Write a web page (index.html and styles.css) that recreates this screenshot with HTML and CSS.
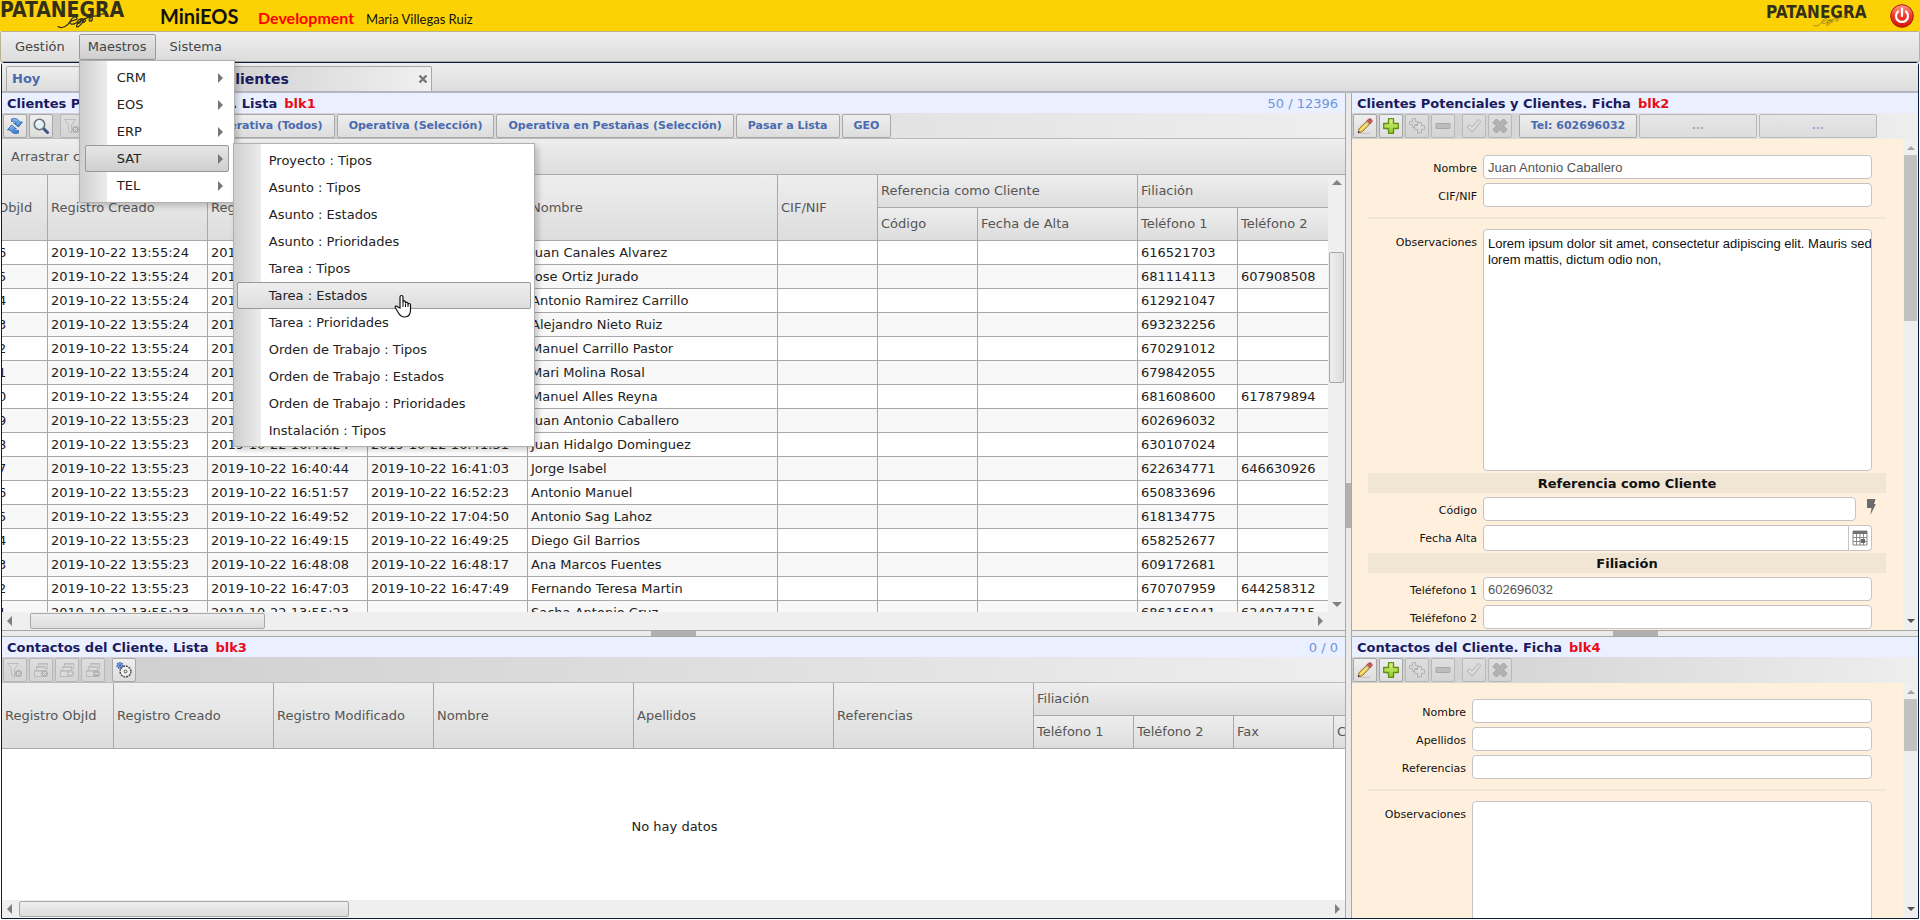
FILE: index.html
```html
<!DOCTYPE html>
<html lang="es">
  <head>
    <meta charset="UTF-8" />
    <meta name="viewport" content="width=device-width, initial-scale=1.0" />
    <title>MiniEOS</title>
    <link rel="stylesheet" href="styles.css">
  </head>
  <body>
    <!-- shared icons -->
    <svg class="sprite" width="0" height="0" aria-hidden="true">
      <defs>
        <linearGradient id="gBlue" x1="0" y1="0" x2="0" y2="1"><stop offset="0" stop-color="#8fc4f5" /><stop offset="1" stop-color="#3878c8" /></linearGradient>
        <linearGradient id="gGreen" x1="0" y1="0" x2="0" y2="1"><stop offset="0" stop-color="#e0f58a" /><stop offset="1" stop-color="#8fc81e" /></linearGradient>
        <linearGradient id="gRed" x1="0" y1="0" x2="0" y2="1"><stop offset="0" stop-color="#ff9a8c" /><stop offset="0.5" stop-color="#ee3a2c" /><stop offset="1" stop-color="#d01408" /></linearGradient>
        <symbol id="i-refresh" viewBox="0 0 16 16">
          <g fill="url(#gBlue)" stroke="#2a5fa8" stroke-width=".8" stroke-linejoin="round">
            <path d="M4.500 1c4-1.200 7 0 8 3h3l-4 5-5-4h2.700C8.500 3.500 7 3 4.500 3.500z" />
            <path d="M11.500 15c-4 1.200-7 0-8-3h-3l4-5 5 4H6.800c.7 1.500 2.200 2 4.700 1.500z" />
          </g>
        </symbol>
        <symbol id="i-search" viewBox="0 0 16 16">
          <path d="M10.500 10.500l4 4" stroke="#3c5484" stroke-width="3" stroke-linecap="round" />
          <circle cx="6.500" cy="6.500" r="5.200" fill="#dff1fa" stroke="#6d7276" stroke-width="1.600" />
          <path d="M3.500 6a3.200 3.200 0 0 1 3-2.700" fill="none" stroke="#fff" stroke-width="1.500" />
        </symbol>
        <symbol id="i-filter" viewBox="0 0 16 16">
          <path d="M.5 1.500h11l-4 5.500v8l-3-2V7z" fill="#ddd" stroke="#aaa" />
          <circle cx="11.500" cy="11.500" r="3.500" fill="#999" /><path d="M10 10l3 3m0-3l-3 3" stroke="#eee" />
        </symbol>
        <symbol id="i-stack" viewBox="0 0 16 16">
          <g fill="#ddd" stroke="#aaa"><rect x="5.500" y="1.500" width="9" height="5" /><rect x="3.500" y="4.500" width="9" height="5" /><rect x="1.500" y="8.500" width="9" height="6" /></g>
          <path d="M5.500 2h9M3.500 5h9M1.500 9h9" stroke="#aaa" stroke-width="1.500" />
        </symbol>
        <symbol id="i-gear" viewBox="0 0 16 16">
          <circle cx="4" cy="3.500" r="2.800" fill="#8fb0e6" stroke="#3f68b5" stroke-width="1.600" stroke-dasharray="1.600 .8" /><circle cx="4" cy="3.500" r="1.200" fill="#3f68b5" />
          <circle cx="9.500" cy="9.500" r="5.400" fill="#f2f2f2" stroke="#555" stroke-width="1.500" stroke-dasharray="2 .8" /><circle cx="9.500" cy="9.500" r="1.400" fill="#fff" stroke="#444" />
        </symbol>
        <symbol id="i-pencil" viewBox="0 0 16 16">
          <path d="M3 15.500h10" stroke="#bbb" stroke-width="1.500" opacity=".7" />
          <path d="M1 15l1.200-4.500 8.600-8.500 3 3L5.300 13.600z" fill="#f6cf55" stroke="#8a6420" stroke-width=".9" stroke-linejoin="round" />
          <path d="M10 2.800L11.800 1a1.500 1.500 0 0 1 2 0l1 1a1.500 1.500 0 0 1 0 2L13 5.800z" fill="#d9534a" stroke="#7d4a48" stroke-width=".7" />
          <path d="M9 3.800l3.200 3.200" stroke="#aaa" stroke-width="1.400" /><path d="M3.800 12.200l7-7" stroke="#fdeeb0" /><path d="M1 15l.6-2.200 1.600 1.600z" fill="#333" />
        </symbol>
        <symbol id="i-plus" viewBox="0 0 16 16">
          <path d="M5.500.7h5v4.800h4.800v5h-4.800v4.800h-5v-4.800H.7v-5h4.800z" fill="url(#gGreen)" stroke="#5d8f16" stroke-width="1.300" stroke-linejoin="round" />
        </symbol>
        <symbol id="i-copy" viewBox="0 0 16 16">
          <g fill="#d8d8d8" stroke="#999"><path d="M3.500.5h3v3h3v3h-3v3h-3v-3h-3v-3h3z" /><path d="M8.500 4.500h4v3h3v4h-3v3.500h-4V11.500h-3v-4h3z" /></g>
        </symbol>
        <symbol id="i-minus" viewBox="0 0 16 16"><rect x="1" y="5.500" width="14" height="5" rx=".5" fill="#aaa" stroke="#888" /></symbol>
        <symbol id="i-check" viewBox="0 0 16 16"><path d="M1 9l2.500-2.500L6 9l6.500-7.500L15 3.500 6.500 14z" fill="#ddd" stroke="#999" stroke-linejoin="round" /></symbol>
        <symbol id="i-cross" viewBox="0 0 16 16"><path d="M4.500 1L8 4.500 11.500 1 15 4.500 11.500 8l3.500 3.500-3.500 3.500L8 11.500 4.500 15 1 11.500 4.500 8 1 4.500z" fill="#999" stroke="#777" stroke-linejoin="round" /></symbol>
        <symbol id="i-bolt" viewBox="0 0 10 18"><path d="M1 1h8.500L8 6h1.800L4.500 17 5.500 10H1z" fill="#6b6b6b" /></symbol>
        <symbol id="i-calendar" viewBox="0 0 16 16">
          <path d="M1 1h14v14H1z" fill="#fff" stroke="#888" /><path d="M1 1h14v3H1z" fill="#707070" />
          <path d="M1 7.500h14M1 11.500h14M4.500 4v11M8 4v11M11.500 4v11" stroke="#888" /><path d="M9 9h4v4H9z" fill="#666" />
        </symbol>
        <symbol id="i-squiggle" viewBox="0 0 60 18">
          <path d="M2 14c5 4 12 0 15-6 2-4 6-7 8-4s-6 2-8 5c-2 4 7 3 9-1 1-3 5-3 4 0-1 4-6 3-4 0s6-4 7-2-5 9-8 9c-2-1 4-9 8-9 5-1 1 5-1 3s5-6 9-6 3 5 0 5 0-6 5-6 4-2 12-3" fill="none" stroke="currentColor" stroke-width="1.500" />
        </symbol>
      </defs>
    </svg>

    <header class="header">
      <div class="logo">PATANEGRA<svg><use href="#i-squiggle" /></svg></div>
      <span class="app-name">MiniEOS</span>
      <span class="app-env">Development</span>
      <span class="app-user">Maria Villegas Ruiz</span>
      <div class="logo logo-small">PATANEGRA<svg><use href="#i-squiggle" /></svg></div>
      <button class="power" aria-label="Salir">
        <svg viewBox="0 0 24 24"><circle cx="12" cy="12" r="11.300" fill="url(#gRed)" stroke="#b5120a" /><path d="M8 7.500a6 6 0 1 0 8 0M12 4.500V12" fill="none" stroke="#fff" stroke-width="2.200" stroke-linecap="round" /></svg>
      </button>
    </header>

    <nav class="menubar">
      <div class="menu-item"><button class="menu-button">Gestión</button></div>
      <div class="menu-item">
        <button class="menu-button active">Maestros</button>
        <div class="popup">
          <a href="#" class="has-sub">CRM</a>
          <a href="#" class="has-sub">EOS</a>
          <a href="#" class="has-sub">ERP</a>
          <div class="sub-holder">
            <a href="#" class="has-sub selected">SAT</a>
            <div class="popup submenu">
              <a href="#">Proyecto : Tipos</a>
              <a href="#">Asunto : Tipos</a>
              <a href="#">Asunto : Estados</a>
              <a href="#">Asunto : Prioridades</a>
              <a href="#">Tarea : Tipos</a>
              <a href="#" class="hover">Tarea : Estados
                <svg class="pointer" viewBox="0 0 18 24"><path d="M6 14V3c0-2 3-2 3 0v6-1c0-1.500 2.500-1.500 2.500.3v1c0-1.500 2.500-1.300 2.500.3v.8c0-1.300 2.500-1.200 2.500.5V16c0 4-2 7-6 7-3 0-4.500-1.500-6-4l-3-5c-1-2 1-2.500 2-1.300z" fill="#fff" stroke="#111" stroke-width="1.200" /><path d="M9 9v4M11.500 9.500v3.500M14 10v3" stroke="#111" /></svg>
              </a>
              <a href="#">Tarea : Prioridades</a>
              <a href="#">Orden de Trabajo : Tipos</a>
              <a href="#">Orden de Trabajo : Estados</a>
              <a href="#">Orden de Trabajo : Prioridades</a>
              <a href="#">Instalación : Tipos</a>
            </div>
          </div>
          <a href="#" class="has-sub">TEL</a>
        </div>
      </div>
      <div class="menu-item"><button class="menu-button">Sistema</button></div>
    </nav>

    <div class="frame">
      <div class="tabs">
        <button class="tab">Hoy</button>
        <div class="tab tab-active"><span>Clientes</span><button class="tab-close" aria-label="Cerrar"><svg viewBox="0 0 10 10"><path d="M1.500 1.500l7 7m0-7l-7 7" stroke="#777" stroke-width="2.400" /></svg></button></div>
      </div>

      <main class="workspace">
        <div class="column column-list">
          <section class="pane pane-top">
            <h2 class="title">Clientes Potenciales y Clientes. Lista <b>blk1</b><span class="count">50 / 12396</span></h2>
            <div class="toolbar">
              <button class="tool" aria-label="Actualizar"><svg><use href="#i-refresh" /></svg></button>
              <button class="tool" aria-label="Buscar"><svg><use href="#i-search" /></svg></button>
              <span class="gap"></span>
              <button class="tool" disabled aria-label="Quitar filtro"><svg><use href="#i-filter" /></svg></button>
              <button class="tool" disabled aria-label="Quitar grupo"><svg><use href="#i-stack" /></svg></button>
              <button class="tool" disabled aria-label="Expandir"><svg><use href="#i-stack" /></svg></button>
              <button class="tool" disabled aria-label="Contraer"><svg><use href="#i-stack" /></svg></button>
              <span class="gap"></span>
              <button class="tool" aria-label="Configurar"><svg><use href="#i-gear" /></svg></button>
              <span class="gap"></span>
              <button class="text-tool">Operativa (Todos)</button>
              <button class="text-tool">Operativa (Selección)</button>
              <button class="text-tool">Operativa en Pestañas (Selección)</button>
              <button class="text-tool">Pasar a Lista</button>
              <button class="text-tool">GEO</button>
            </div>
            <div class="group-panel">Arrastrar columna</div>
            <div class="grid">
              <div class="grid-view">
                <table class="data clients">
                  <colgroup><col class="c-id"><col class="c-date"><col class="c-date"><col class="c-date"><col class="c-name"><col class="c-short"><col class="c-short"><col class="c-date"><col class="c-short"><col class="c-short"></colgroup>
                  <thead>
                    <tr>
                      <th rowspan="2">ObjId</th><th rowspan="2">Registro Creado</th><th rowspan="2">Registro Mod</th><th rowspan="2">Llamada</th><th rowspan="2">Nombre</th><th rowspan="2">CIF/NIF</th><th colspan="2">Referencia como Cliente</th><th colspan="2">Filiación</th>
                    </tr>
                    <tr><th>Código</th><th>Fecha de Alta</th><th>Teléfono 1</th><th>Teléfono 2</th></tr>
                  </thead>
                  <tbody>
                    <tr><td>6</td><td>2019-10-22 13:55:24</td><td>2019-10-22</td><td></td><td>Juan Canales Alvarez</td><td></td><td></td><td></td><td>616521703</td><td></td></tr>
                    <tr><td>5</td><td>2019-10-22 13:55:24</td><td>2019-10-22</td><td></td><td>Jose Ortiz Jurado</td><td></td><td></td><td></td><td>681114113</td><td>607908508</td></tr>
                    <tr><td>4</td><td>2019-10-22 13:55:24</td><td>2019-10-22</td><td></td><td>Antonio Ramirez Carrillo</td><td></td><td></td><td></td><td>612921047</td><td></td></tr>
                    <tr><td>3</td><td>2019-10-22 13:55:24</td><td>2019-10-22</td><td></td><td>Alejandro Nieto Ruiz</td><td></td><td></td><td></td><td>693232256</td><td></td></tr>
                    <tr><td>2</td><td>2019-10-22 13:55:24</td><td>2019-10-22</td><td></td><td>Manuel Carrillo Pastor</td><td></td><td></td><td></td><td>670291012</td><td></td></tr>
                    <tr><td>1</td><td>2019-10-22 13:55:24</td><td>2019-10-22</td><td></td><td>Mari Molina Rosal</td><td></td><td></td><td></td><td>679842055</td><td></td></tr>
                    <tr><td>0</td><td>2019-10-22 13:55:24</td><td>2019-10-22</td><td></td><td>Manuel Alles Reyna</td><td></td><td></td><td></td><td>681608600</td><td>617879894</td></tr>
                    <tr><td>9</td><td>2019-10-22 13:55:23</td><td>2019-10-22</td><td></td><td>Juan Antonio Caballero</td><td></td><td></td><td></td><td>602696032</td><td></td></tr>
                    <tr><td>8</td><td>2019-10-22 13:55:23</td><td>2019-10-22 16:41:24</td><td>2019-10-22 16:41:31</td><td>Juan Hidalgo Dominguez</td><td></td><td></td><td></td><td>630107024</td><td></td></tr>
                    <tr><td>7</td><td>2019-10-22 13:55:23</td><td>2019-10-22 16:40:44</td><td>2019-10-22 16:41:03</td><td>Jorge Isabel</td><td></td><td></td><td></td><td>622634771</td><td>646630926</td></tr>
                    <tr><td>6</td><td>2019-10-22 13:55:23</td><td>2019-10-22 16:51:57</td><td>2019-10-22 16:52:23</td><td>Antonio Manuel</td><td></td><td></td><td></td><td>650833696</td><td></td></tr>
                    <tr><td>5</td><td>2019-10-22 13:55:23</td><td>2019-10-22 16:49:52</td><td>2019-10-22 17:04:50</td><td>Antonio Sag Lahoz</td><td></td><td></td><td></td><td>618134775</td><td></td></tr>
                    <tr><td>4</td><td>2019-10-22 13:55:23</td><td>2019-10-22 16:49:15</td><td>2019-10-22 16:49:25</td><td>Diego Gil Barrios</td><td></td><td></td><td></td><td>658252677</td><td></td></tr>
                    <tr><td>3</td><td>2019-10-22 13:55:23</td><td>2019-10-22 16:48:08</td><td>2019-10-22 16:48:17</td><td>Ana Marcos Fuentes</td><td></td><td></td><td></td><td>609172681</td><td></td></tr>
                    <tr><td>2</td><td>2019-10-22 13:55:23</td><td>2019-10-22 16:47:03</td><td>2019-10-22 16:47:49</td><td>Fernando Teresa Martin</td><td></td><td></td><td></td><td>670707959</td><td>644258312</td></tr>
                    <tr><td>1</td><td>2019-10-22 13:55:23</td><td>2019-10-22 13:55:23</td><td></td><td>Sacha Antonio Cruz</td><td></td><td></td><td></td><td>686165941</td><td>624974715</td></tr>
                  </tbody>
                </table>
              </div>
              <div class="vscroll"><i class="arrow up"></i><span class="track"><i class="thumb thumb-v"></i></span><i class="arrow down"></i></div>
            </div>
            <div class="hscroll hscroll-clients"><i class="arrow left"></i><span class="track"><i class="thumb thumb-h"></i></span><i class="arrow right"></i></div>
          </section>

          <div class="splitter-h"><i></i></div>

          <section class="pane pane-bottom">
            <h2 class="title">Contactos del Cliente. Lista <b>blk3</b><span class="count">0 / 0</span></h2>
            <div class="toolbar">
              <button class="tool" disabled aria-label="Quitar filtro"><svg><use href="#i-filter" /></svg></button>
              <button class="tool" disabled aria-label="Quitar grupo"><svg><use href="#i-stack" /><circle cx="11.500" cy="11.500" r="3.500" fill="#999" /><path d="M10 10l3 3m0-3l-3 3" stroke="#eee" /></svg></button>
              <button class="tool" disabled aria-label="Expandir"><svg><use href="#i-stack" /><circle cx="11.500" cy="11.500" r="3.500" fill="#aaa" /><path d="M9.500 11.500h4m-2-2v4" stroke="#eee" /></svg></button>
              <button class="tool" disabled aria-label="Contraer"><svg><use href="#i-stack" /><circle cx="11.500" cy="11.500" r="3.500" fill="#999" /><path d="M9.500 11.500h4" stroke="#eee" /></svg></button>
              <span class="gap"></span>
              <button class="tool" aria-label="Configurar"><svg><use href="#i-gear" /></svg></button>
            </div>
            <div class="grid contacts-grid">
              <table class="data contacts">
                <colgroup><col class="c-first"><col class="c-date"><col class="c-date"><col class="c-wide"><col class="c-wide"><col class="c-wide"><col class="c-short"><col class="c-short"><col class="c-short"><col class="c-short"></colgroup>
                <thead>
                  <tr><th rowspan="2">Registro ObjId</th><th rowspan="2">Registro Creado</th><th rowspan="2">Registro Modificado</th><th rowspan="2">Nombre</th><th rowspan="2">Apellidos</th><th rowspan="2">Referencias</th><th colspan="4">Filiación</th></tr>
                  <tr><th>Teléfono 1</th><th>Teléfono 2</th><th>Fax</th><th>Correo</th></tr>
                </thead>
              </table>
              <p class="empty">No hay datos</p>
            </div>
            <div class="hscroll hscroll-contacts"><i class="arrow left"></i><span class="track"><i class="thumb thumb-h"></i></span><i class="arrow right"></i></div>
          </section>
        </div>

        <div class="splitter-v"><i></i></div>

        <div class="column column-form">
          <section class="pane pane-top">
            <h2 class="title">Clientes Potenciales y Clientes. Ficha <b>blk2</b></h2>
            <div class="toolbar">
              <button class="tool" aria-label="Editar"><svg><use href="#i-pencil" /></svg></button>
              <button class="tool" aria-label="Añadir"><svg><use href="#i-plus" /></svg></button>
              <button class="tool" disabled aria-label="Duplicar"><svg><use href="#i-copy" /></svg></button>
              <button class="tool" disabled aria-label="Eliminar"><svg><use href="#i-minus" /></svg></button>
              <span class="gap"></span>
              <button class="tool" disabled aria-label="Aceptar"><svg><use href="#i-check" /></svg></button>
              <button class="tool" disabled aria-label="Cancelar"><svg><use href="#i-cross" /></svg></button>
              <span class="gap"></span>
              <button class="text-tool phone">Tel: 602696032</button>
              <button class="text-tool phone" disabled>...</button>
              <button class="text-tool phone" disabled>...</button>
            </div>
            <div class="form-area">
              <form class="form">
                <div class="row"><label for="nombre">Nombre</label><input type="text" id="nombre" value="Juan Antonio Caballero"></div>
                <div class="row"><label for="cif">CIF/NIF</label><input type="text" id="cif"></div>
                <hr>
                <div class="row"><label for="obs">Observaciones</label><textarea id="obs">Lorem ipsum dolor sit amet, consectetur adipiscing elit. Mauris sed
lorem mattis, dictum odio non,</textarea></div>
                <h3>Referencia como Cliente</h3>
                <div class="row"><label for="codigo">Código</label><input type="text" id="codigo"><button type="button" class="bolt" aria-label="Generar"><svg><use href="#i-bolt" /></svg></button></div>
                <div class="row row-date"><label for="fecha">Fecha Alta</label><input type="text" id="fecha"><button type="button" class="calendar" aria-label="Calendario"><svg><use href="#i-calendar" /></svg></button></div>
                <h3>Filiación</h3>
                <div class="row"><label for="tel1">Teléfefono 1</label><input type="text" id="tel1" value="602696032"></div>
                <div class="row"><label for="tel2">Teléfefono 2</label><input type="text" id="tel2"></div>
              </form>
              <div class="form-scroll"><i class="arrow up"></i><span class="track"><i class="thumb"></i></span><i class="arrow down"></i></div>
            </div>
          </section>

          <div class="splitter-h"><i></i></div>

          <section class="pane pane-bottom">
            <h2 class="title">Contactos del Cliente. Ficha <b>blk4</b></h2>
            <div class="toolbar">
              <button class="tool" aria-label="Editar"><svg><use href="#i-pencil" /></svg></button>
              <button class="tool" aria-label="Añadir"><svg><use href="#i-plus" /></svg></button>
              <button class="tool" disabled aria-label="Duplicar"><svg><use href="#i-copy" /></svg></button>
              <button class="tool" disabled aria-label="Eliminar"><svg><use href="#i-minus" /></svg></button>
              <span class="gap"></span>
              <button class="tool" disabled aria-label="Aceptar"><svg><use href="#i-check" /></svg></button>
              <button class="tool" disabled aria-label="Cancelar"><svg><use href="#i-cross" /></svg></button>
            </div>
            <div class="form-area">
              <form class="form form-contact">
                <div class="row"><label for="c-nombre">Nombre</label><input type="text" id="c-nombre"></div>
                <div class="row"><label for="c-apellidos">Apellidos</label><input type="text" id="c-apellidos"></div>
                <div class="row"><label for="c-ref">Referencias</label><input type="text" id="c-ref"></div>
                <hr>
                <div class="row"><label for="c-obs">Observaciones</label><textarea id="c-obs"></textarea></div>
              </form>
              <div class="form-scroll"><i class="arrow up"></i><span class="track"><i class="thumb thumb-short"></i></span><i class="arrow down"></i></div>
            </div>
          </section>
        </div>
      </main>
    </div>
  </body>
</html>
```

FILE: styles.css
```css
:root {
  --yellow: #fcd205;
  --line: #a8a8a8;
  --navy: #0b1d3a;
  --link: #4a6bb0;
  --cream: #fff0dd;
  --panel: linear-gradient(#eeeeee, #dddddd);
}

* {
  box-sizing: border-box;
}

body {
  margin: 0;
  height: 100vh;
  display: flex;
  flex-direction: column;
  overflow: hidden;
  padding-bottom: 1px;
  font-family: Verdana, 'DejaVu Sans', sans-serif;
  font-size: 13px;
  line-height: 16px;
  color: #222;
  background: #fff;
}

button,
input,
textarea {
  font: inherit;
  margin: 0;
}

.sprite {
  position: absolute;
}

/* header */
.header {
  flex: none;
  height: 31px;
  display: flex;
  align-items: baseline;
  background: var(--yellow);
  font-family: Lato, sans-serif;
  color: #111;
}

.logo {
  position: relative;
  align-self: flex-start;
  width: 124px;
  margin-right: 36px;
  font: bold 21px/20px 'DejaVu Sans Condensed', sans-serif;
  color: #33301a;
}

.logo svg {
  position: absolute;
  left: 56px;
  top: 13px;
  width: 50px;
  height: 18px;
}

.logo-small {
  width: 100px;
  margin: 0 24px 0 auto;
  font-size: 17px;
  line-height: 24px;
}

.logo-small svg {
  left: 46px;
  top: 15px;
  width: 36px;
  height: 14px;
  color: #9a8410;
}

.app-name {
  width: 98px;
  font-size: 20px;
  line-height: 32px;
  font-weight: bold;
}

.app-env {
  width: 108px;
  font-size: 16px;
  font-weight: bold;
  color: #f00;
}

.app-user {
  font-size: 13px;
}

.power {
  align-self: center;
  width: 24px;
  height: 24px;
  margin-right: 6px;
  padding: 0;
  border: 0;
  background: none;
}

.power svg {
  display: block;
}

/* menu bar */
.menubar {
  flex: none;
  height: 31px;
  display: flex;
  gap: 5px;
  padding: 2px 5px;
  border: 1px solid #b9b390;
  border-bottom-color: #aaa;
  border-radius: 2px;
  background: var(--panel);
}

.menu-item {
  position: relative;
}

.menu-button {
  height: 26px;
  padding: 0 8px;
  border: 1px solid transparent;
  border-radius: 2px;
  background: none;
  color: #444;
}

.menu-button.active {
  border-color: #999;
  background: linear-gradient(#e6e6e6, #cfcfcf);
}

.popup {
  position: absolute;
  z-index: 10;
  top: 26px;
  left: 0;
  width: 156px;
  padding: 3px 5px;
  border: 1px solid #b0b0b0;
  background: linear-gradient(90deg, #cfcfcf, #ececec 27px, #fff 27px);
  box-shadow: 3px 3px 6px rgba(0, 0, 0, 0.2);
}

.popup a {
  display: flex;
  align-items: center;
  justify-content: space-between;
  height: 27px;
  padding: 0 5px 0 31px;
  border: 1px solid transparent;
  border-radius: 2px;
  color: #222;
  text-decoration: none;
  white-space: nowrap;
}

.has-sub::after {
  content: '';
  border: 5px solid transparent;
  border-left-color: #777;
  border-right-width: 0;
}

.popup .selected {
  border-color: #999;
  background: linear-gradient(#e6e6e6, #cfcfcf);
}

.popup .hover {
  border-color: #999;
  background: var(--panel);
}

.sub-holder {
  position: relative;
}

.submenu {
  top: -2px;
  left: 148px;
  width: 302px;
  padding: 3px 3px 2px;
}

.submenu a {
  position: relative;
}

.pointer {
  position: absolute;
  left: 156px;
  top: 11px;
  width: 18px;
  height: 24px;
  z-index: 2;
}

/* frame and tabs */
.frame {
  flex: 1;
  min-height: 0;
  display: flex;
  flex-direction: column;
  margin: 0 1px;
  border: 1px solid var(--navy);
  border-radius: 3px 3px 0 0;
}

.tabs {
  flex: none;
  height: 30px;
  display: flex;
  align-items: flex-end;
  padding-left: 4px;
  border-bottom: 2px solid #b4b6bb;
  background: var(--panel);
}

.tab {
  width: 184px;
  height: 25px;
  padding: 0 5px;
  border: 1px solid var(--line);
  border-bottom: 0;
  border-radius: 2px 2px 0 0;
  background: var(--panel);
  font-weight: bold;
  color: var(--link);
  text-align: left;
}

.tab-active {
  width: 242px;
  display: flex;
  align-items: center;
  justify-content: space-between;
  padding: 0 3px 0 34px;
  background: linear-gradient(90deg, #cccccc, #f0f0f0);
  font-size: 14px;
  color: #1a1a5e;
}

.tab-close {
  padding: 0;
  border: 0;
  background: none;
  line-height: 0;
}

.tab-close svg {
  width: 10px;
  height: 10px;
}

/* workspace */
.workspace {
  flex: 1;
  min-height: 0;
  display: flex;
}

.column {
  min-width: 0;
  display: flex;
  flex-direction: column;
}

.column-list {
  flex: 1343 1 0;
}

.column-form {
  flex: 566 1 0;
}

.pane {
  min-height: 0;
  display: flex;
  flex-direction: column;
  overflow: hidden;
}

.pane-top {
  flex: 537 1 0;
}

.pane-bottom {
  flex: 281 1 0;
}

.splitter-h,
.splitter-v {
  flex: none;
  display: flex;
  align-items: center;
  justify-content: center;
  background: #eaeaea;
}

.splitter-h {
  height: 7px;
  border: solid var(--line);
  border-width: 1px 0;
}

.splitter-v {
  width: 7px;
  border: solid var(--line);
  border-width: 0 1px;
}

.splitter-h i {
  width: 45px;
  height: 5px;
  background: #b0b0b0;
}

.splitter-v i {
  width: 5px;
  height: 45px;
  background: #b0b0b0;
}

.title {
  flex: none;
  height: 20px;
  display: flex;
  gap: 7px;
  margin: 0;
  padding: 0 5px;
  background: #eaf0ff;
  font-size: 13px;
  line-height: 21px;
  color: #1a1a5e;
  white-space: nowrap;
}

.title b {
  color: #e80c18;
}

.count {
  margin-left: auto;
  padding-right: 2px;
  font-weight: normal;
  color: #6d94dd;
}

.toolbar {
  flex: none;
  height: 26px;
  display: flex;
  align-items: center;
  gap: 2px;
  padding-left: 1px;
  background: linear-gradient(90deg, #cdcdcd, #eeeeee);
}

.column-list .toolbar {
  border-bottom: 1px solid #bbb;
}

.gap {
  width: 3px;
}

.tool,
.text-tool {
  height: 24px;
  border: 1px solid var(--line);
  border-radius: 2px;
  background: var(--panel);
}

.tool {
  flex: none;
  width: 24px;
  padding: 0;
  line-height: 0;
}

.tool svg {
  width: 16px;
  height: 16px;
}

.tool:disabled svg {
  opacity: 0.6;
}

.text-tool {
  padding: 0 11px;
  font-size: 11px;
  font-weight: bold;
  color: var(--link);
  white-space: nowrap;
}

.tool:disabled,
.text-tool:disabled {
  border-color: #b8b8b8;
  background: linear-gradient(#dedede, #d4d4d4);
}

.text-tool:disabled {
  background: linear-gradient(#e6e6e6, #dddddd);
  color: #98a9cc;
}

.phone {
  width: 118px;
  padding: 0;
}

.group-panel {
  flex: none;
  height: 36px;
  padding-left: 9px;
  border-bottom: 1px solid var(--line);
  background: var(--panel);
  line-height: 36px;
  color: #555;
}

/* grids */
.grid {
  flex: 1;
  min-height: 0;
  display: flex;
}

.grid-view {
  flex: 1;
  min-width: 0;
  overflow: hidden;
}

.data {
  table-layout: fixed;
  width: 0;
  border-spacing: 0;
}

.clients {
  margin-left: -7px;
}

.c-id {
  width: 53px;
}

.c-first {
  width: 112px;
}

.c-date {
  width: 160px;
}

.c-name {
  width: 250px;
}

.c-wide {
  width: 200px;
}

.c-short {
  width: 100px;
}

.data th,
.data td {
  padding: 0 0 0 3px;
  border: solid var(--line);
  border-width: 0 1px 1px 0;
  text-align: left;
  white-space: nowrap;
  overflow: hidden;
}

.data th {
  height: 33px;
  background: var(--panel);
  font-weight: normal;
  color: #555;
}

.data td {
  height: 24px;
}

.data tbody tr:nth-child(even) {
  background: #f8f8f8;
}

.contacts-grid {
  flex-direction: column;
  overflow: hidden;
}

.empty {
  flex: 1;
  display: flex;
  align-items: center;
  justify-content: center;
  margin: 0;
  padding: 4px 0 0 2px;
}

/* scroll bars */
.vscroll,
.hscroll,
.form-scroll {
  flex: none;
  display: flex;
  align-items: center;
  background: #efefef;
}

.vscroll {
  width: 17px;
  flex-direction: column;
  padding: 5px 0;
}

.hscroll {
  height: 18px;
  padding: 0 5px;
}

.form-scroll {
  width: 15px;
  flex-direction: column;
  padding: 7px 0;
}

.track {
  flex: 1;
}

.thumb {
  display: block;
  border: 1px solid var(--line);
  border-radius: 2px;
  background: var(--panel);
}

.thumb-v {
  width: 15px;
  height: 131px;
  margin-top: 67px;
  background: linear-gradient(90deg, #eeeeee, #dddddd);
}

.thumb-h {
  width: 235px;
  height: 16px;
  margin-left: 18px;
}

.hscroll-clients {
  padding-right: 22px;
}

.hscroll-contacts .thumb-h {
  width: 330px;
  margin-left: 7px;
}

.form-scroll .thumb {
  width: 13px;
  height: 166px;
  margin-top: 5px;
  border: 0;
  border-radius: 0;
  background: #c1c1c1;
}

.form-scroll .thumb-short {
  height: 52px;
}

.arrow {
  border: 5px solid transparent;
}

.arrow.up {
  border-top-width: 0;
  border-bottom-color: #808080;
}

.arrow.down {
  border-bottom-width: 0;
  border-top-color: #808080;
}

.arrow.left {
  border-left-width: 0;
  border-right-color: #808080;
}

.arrow.right {
  border-right-width: 0;
  border-left-color: #808080;
}

.form-scroll .arrow {
  border-left-width: 4px;
  border-right-width: 4px;
}

.form-scroll .down {
  border-top: 4px solid #505050;
}

.form-scroll .up {
  border-bottom: 4px solid #a3a3a3;
}

/* forms */
.form-area {
  flex: 1;
  min-height: 0;
  display: flex;
  background: var(--cream);
}

.form {
  flex: 1;
  min-width: 0;
  padding: 12px 17px 0 16px;
  overflow: hidden;
}

.row {
  display: flex;
  align-items: flex-start;
  margin-top: 4px;
  padding-right: 14px;
}

.row label {
  flex: none;
  width: 115px;
  padding: 6px 6px 0 0;
  font-size: 11px;
  color: #111;
  text-align: right;
}

.form-contact label {
  width: 104px;
}

.row input,
.row textarea {
  flex: 1;
  min-width: 0;
  height: 24px;
  padding: 0 4px;
  border: 1px solid #c4c4c4;
  border-radius: 4px;
  background: #fff;
  font-family: Arial, 'Liberation Sans', sans-serif;
  color: #555;
}

.row textarea {
  height: 242px;
  padding: 6px 0 0 4px;
  color: #111;
  white-space: pre;
  resize: none;
  overflow: hidden;
}

.form hr {
  height: 2px;
  margin: 10px 0 6px;
  border: 0;
  background: #f1e5d3;
}

.form hr + .row {
  margin-top: 10px;
}

.form h3 {
  height: 20px;
  margin: 2px 0 0;
  background: #f1e5d3;
  font-size: 13px;
  line-height: 22px;
  text-align: center;
  color: #111;
}

.bolt {
  width: 10px;
  height: 18px;
  margin: 1px -4px 0 10px;
  padding: 0;
  border: 0;
  background: none;
}

.bolt svg {
  display: block;
  width: 10px;
  height: 18px;
}

.row-date input {
  height: 26px;
  border-radius: 4px 0 0 4px;
}

.calendar {
  width: 23px;
  height: 26px;
  padding: 0;
  border: 1px solid #c4c4c4;
  border-left: 0;
  border-radius: 0 4px 4px 0;
  background: #fff;
  line-height: 0;
}

.calendar svg {
  width: 16px;
  height: 16px;
}
```
